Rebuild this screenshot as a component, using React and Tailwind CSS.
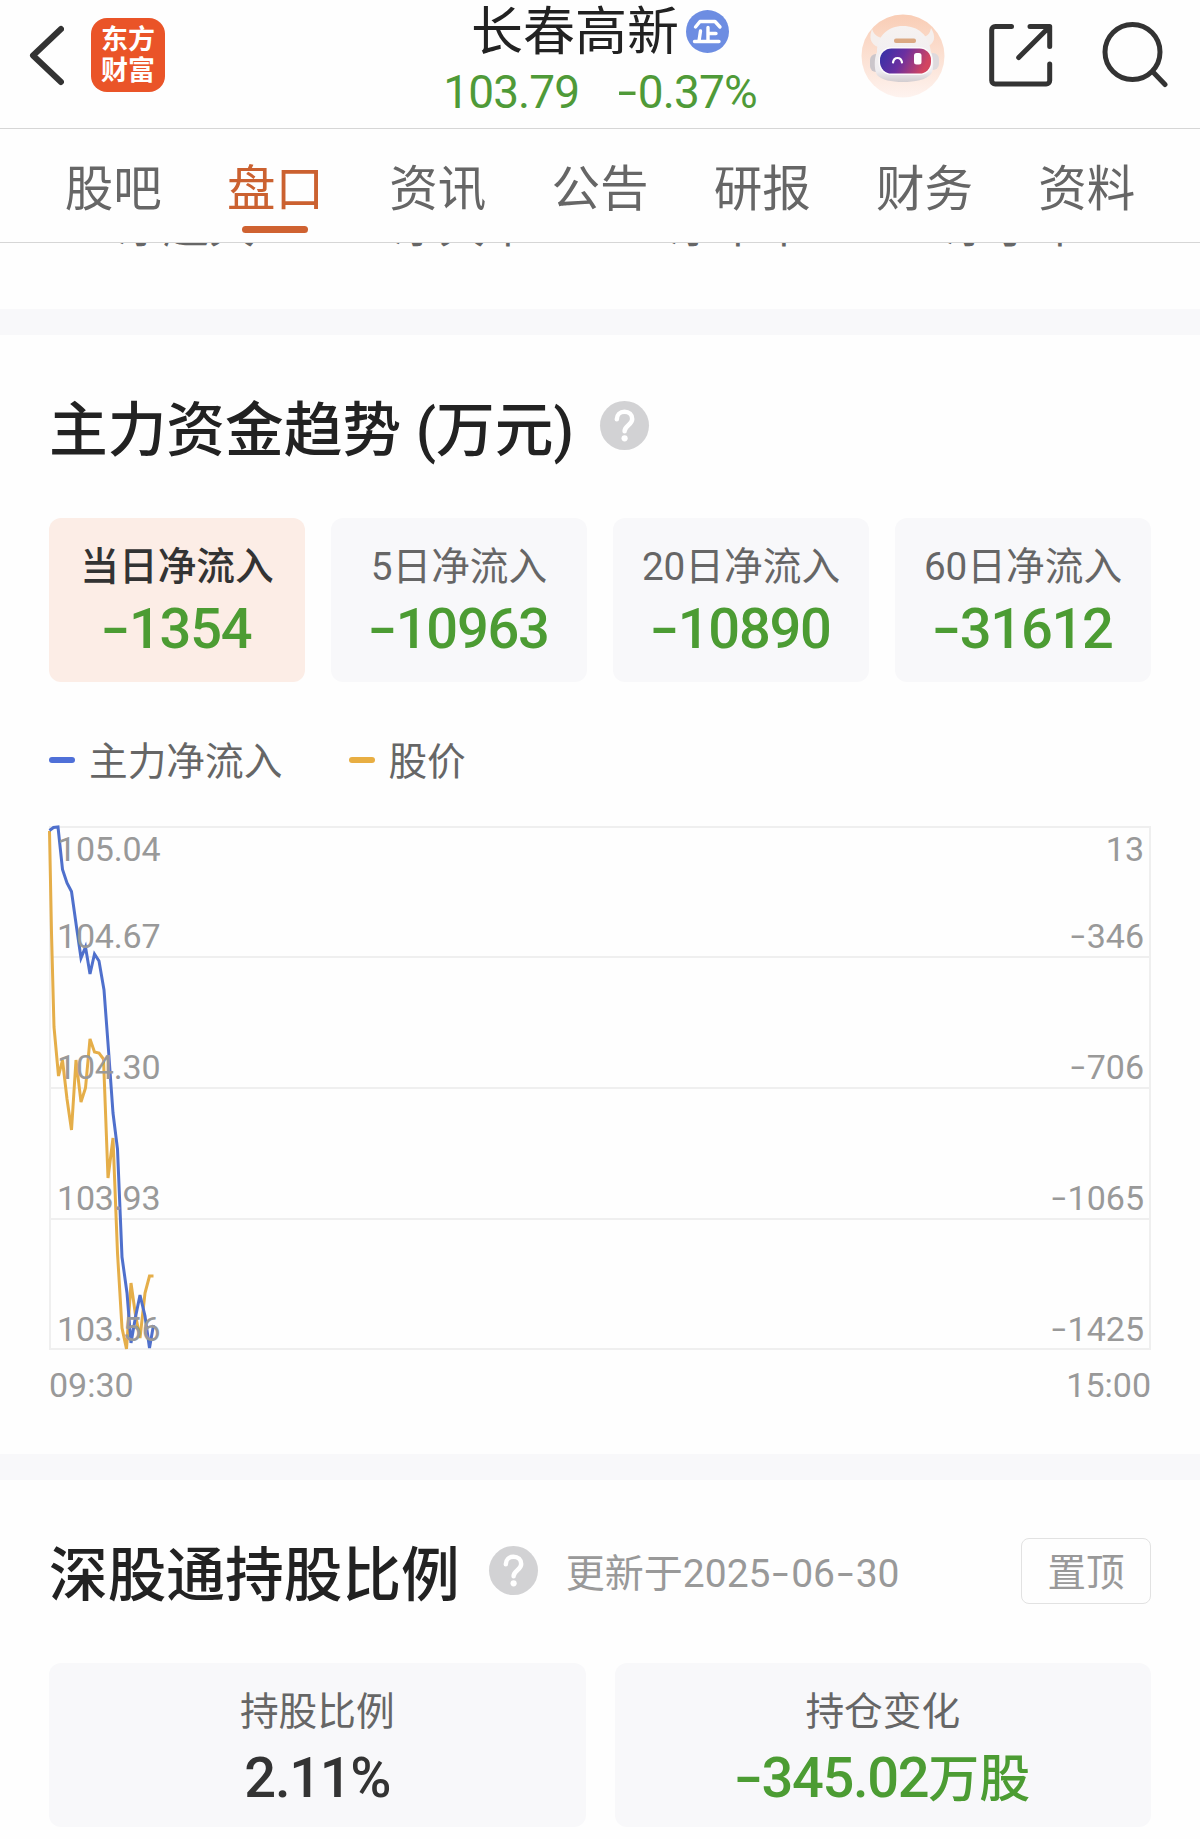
import React from "react";

const TABS = ["股吧", "盘口", "资讯", "公告", "研报", "财务", "资料"];
const ORDER_LABELS = ["净超大", "净大单", "净中单", "净小单"];

const PERIODS = [
  { label: "当日净流入", value: "-1354", active: true },
  { label: "5日净流入", value: "-10963" },
  { label: "20日净流入", value: "-10890" },
  { label: "60日净流入", value: "-31612" },
];

const ROWS = [
  { price: "105.04", flow: "13", top: "top-[3px]" },
  { price: "104.67", flow: "-346", top: "top-[90px]" },
  { price: "104.30", flow: "-706", top: "top-[221px]" },
  { price: "103.93", flow: "-1065", top: "top-[352px]" },
  { price: "103.56", flow: "-1425", top: "top-[483px]" },
];

// one point per minute, in chart pixels
const FLOW =
  "0.5,3.5 4.5,0.5 9,0 13.5,42.5 18,56 22.5,64.5 27.5,100 32,131 36.5,120 41,147 45.5,127 50,134 55,163 59.5,223 64,286 68.5,322 73,430 78,466 82,516 86.5,490 91,468 96,489 100.5,521 104.5,498";
const PRICE =
  "0.5,4 2.5,106 5,200 9.5,249 13.5,233 18,272 22.5,303 27,233 32,275 36.5,261 41,212 45.5,225 50,226 54.5,232 59,351 64,311 68.5,426 73,501 77.5,522 82,456 86.5,488 91,511 96,466 100.5,449 104.5,449";

// the hyphen is drawn wider than the font's own, as in DIN figures
function Num({ children, gap = "w-[0.47em]" }) {
  return children.split(/(-)/).map((part, i) =>
    part === "-" ? (
      <span key={i} className={`inline-block text-center tracking-normal ${gap}`}>
        <span className="inline-block scale-x-[1.5] -translate-y-[0.02em]">-</span>
      </span>
    ) : (
      part
    )
  );
}

function Help() {
  return (
    <span className="mb-[6px] grid h-[49px] w-[49px] shrink-0 place-items-center rounded-full bg-[#d2d2d4]">
      <svg viewBox="0 0 49 49" className="h-full w-full" fill="none" stroke="#fff" strokeWidth="4.500" strokeLinecap="round">
        <path d="M16.800 18.300c0-4.600 3.300-7.600 7.700-7.600s7.700 3 7.700 7.300c0 5.800-7.600 6.600-7.600 12.200" />
        <circle cx="24.600" cy="37.300" r="3.100" fill="#fff" stroke="none" />
      </svg>
    </span>
  );
}

function Robot() {
  return (
    <svg viewBox="0 0 84 84" className="h-[84px] w-[84px]">
      <defs>
        <linearGradient id="halo" x1="0" y1="0" x2="0" y2="1">
          <stop offset="0" stopColor="#f9cdb5" />
          <stop offset="1" stopColor="#fef3ef" />
        </linearGradient>
        <linearGradient id="shell" x1="0" y1="0" x2="0" y2="1">
          <stop offset="0" stopColor="#f6f2f1" />
          <stop offset="0.8" stopColor="#efedf0" />
          <stop offset="1" stopColor="#d3cdd0" />
        </linearGradient>
        <linearGradient id="visor" x1="0" y1="0" x2="1" y2="0.250">
          <stop offset="0" stopColor="#3232a8" />
          <stop offset="0.5" stopColor="#6b2fa0" />
          <stop offset="1" stopColor="#d24560" />
        </linearGradient>
      </defs>
      <circle cx="42" cy="42" r="41.500" fill="url(#halo)" />
      <path d="M11 15c-3 8-2 15 6 18l7-9c-7 0-11-3-13-9zM70 14c5 8 4 15-3 18l-7-9c6 0 9-3 10-9z" fill="#f5efed" />
      <rect x="9" y="40" width="12" height="18" rx="6" fill="#cbc6cb" />
      <rect x="66" y="39" width="12" height="17" rx="6" fill="#dedadd" />
      <path d="M16 38C16 22 27 12 42 12s26 9 28 26c3 6 3 18 0 22-5 6-16 8-28 8s-21-2-26-7c-3-5-3-17 0-23z" fill="url(#shell)" />
      <rect x="33" y="24.500" width="22" height="4.500" rx="2" fill="#dba983" />
      <rect x="17.500" y="33" width="54" height="28" rx="13" fill="#fcfafb" />
      <rect x="19" y="34.500" width="51" height="25" rx="11.500" fill="url(#visor)" />
      <path d="M32 48.500c1-6 8-6 9 0" fill="none" stroke="#fff" strokeWidth="2.200" strokeLinecap="round" />
      <rect x="53" y="39" width="7.500" height="11.500" rx="2.500" fill="#fff" />
    </svg>
  );
}

function Header() {
  return (
    <header className="grid h-[129px] grid-cols-[430px_340px_430px] border-b border-[#d6d6d6]">
      <div className="flex pl-[28px]">
        <svg viewBox="0 0 36 62" className="mt-[25px] h-[62px] w-9" fill="none" stroke="#333" strokeWidth="6" strokeLinecap="round" strokeLinejoin="round">
          <path d="M33 4 5 30.500 33 57" />
        </svg>
        <div className="mt-[18px] ml-[27px] flex h-[74px] w-[74px] flex-col items-center justify-center rounded-2xl bg-[#ea5428] pt-[2px] text-[27px] leading-[31px] font-bold text-white">
          <span>东方</span>
          <span>财富</span>
        </div>
      </div>

      <div className="flex flex-col items-center text-center">
        <div className="flex h-[63px] items-center gap-[7px]">
          <span className="pt-[3px] text-[52px] leading-[60px] text-[#222]">长春高新</span>
          <svg viewBox="0 0 43 43" className="h-[43px] w-[43px]">
            <circle cx="21.500" cy="21.500" r="21.500" fill="#6d8de2" />
            <path d="M9.500 17 14 11.500h15L34 17M22 17.500V31M14.500 21 13 31M22.500 23.500H30M8.500 31.500H33" fill="none" stroke="#fff" strokeWidth="3.400" strokeLinecap="round" strokeLinejoin="round" />
          </svg>
        </div>
        <div className="flex gap-[37px] text-[46px] leading-[58px] tracking-[-0.900px] text-[#4f9a38]">
          <span>103.79</span>
          <span><Num>-0.37%</Num></span>
        </div>
      </div>

      <div className="flex pl-[91px]">
        <div className="mt-[14px]"><Robot /></div>
        <svg viewBox="0 0 64 64" className="mt-6 ml-[44px] h-16 w-16" fill="none" stroke="#333" strokeWidth="5" strokeLinecap="round" strokeLinejoin="round">
          <path d="M22.500 2.500H6.200a3.500 3.500 0 0 0-3.500 3.500v50.500A3.500 3.500 0 0 0 6.200 60h51a3.500 3.500 0 0 0 3.500-3.500V40" />
          <path d="M41 2.500h19.700V22.500M60 3.200 29.700 33.500" />
        </svg>
        <svg viewBox="0 0 66 66" className="mt-[22px] ml-[49px] h-[66px] w-[66px]" fill="none" stroke="#333" strokeWidth="5" strokeLinecap="round">
          <circle cx="30.500" cy="30" r="27.500" />
          <path d="m51 50 12 12.500" />
        </svg>
      </div>
    </header>
  );
}

function Tabs() {
  return (
    <nav className="grid h-[114px] grid-cols-7 border-b border-[#d6d6d6] px-8">
      {TABS.map((t) => {
        const active = t === "盘口";
        return (
          <div key={t} className={`flex flex-col items-center text-[48.500px] ${active ? "text-[#cb6130]" : "text-[#666]"}`}>
            <span className="mt-[25px] leading-[72px]">{t}</span>
            {active && <span className="h-[7px] w-[66px] rounded-full bg-[#cf6231]" />}
          </div>
        );
      })}
    </nav>
  );
}

function Card({ label, value, unit, active, tone = "text-[#4c9c33]", valueTop = "mt-[3px]" }) {
  return (
    <div className={`flex h-[164px] flex-1 flex-col items-center rounded-xl ${active ? "bg-[#fcede6]" : "bg-[#f8f8fa]"}`}>
      <span className={`mt-[24px] text-[38.700px] leading-[50px] ${active ? "font-medium text-[#333]" : "text-[#666]"}`}>{label}</span>
      <span className={`text-[56px] leading-[68px] font-medium tracking-[-1.300px] ${valueTop} ${tone}`}>
        <Num>{value}</Num>
        {unit && <span className="text-[51px] tracking-normal">{unit}</span>}
      </span>
    </div>
  );
}

function Chart() {
  return (
    <div className="mt-[41px]">
      <div className="relative h-[524px] text-[34px] leading-[40px] text-[#999]">
        <svg viewBox="0 0 1102 524" className="absolute inset-0 h-full w-full overflow-visible" fill="none">
          <path d="M0 1H1102M0 131H1102M0 262H1102M0 393H1102M0 523H1102M1 0V524M1101 0V524" stroke="#efefef" strokeWidth="2" />
          <g strokeWidth="3" transform="translate(0 1)">
            <polyline points={PRICE} stroke="#e5ae49" />
            <polyline points={FLOW} stroke="#4f70cc" />
          </g>
        </svg>
        {ROWS.map((r) => (
          <div key={r.price} className={`absolute inset-x-0 flex justify-between pr-[7px] pl-2 ${r.top}`}>
            <span className="tracking-[-0.200px]">{r.price}</span>
            <span><Num gap="w-[0.5em]">{r.flow}</Num></span>
          </div>
        ))}
      </div>
      <div className="mt-[15px] flex justify-between text-[34px] leading-[40px] text-[#999]">
        <span>09:30</span>
        <span>15:00</span>
      </div>
    </div>
  );
}

export default function App() {
  return (
    <div className="h-[1839px] w-[1200px] overflow-hidden bg-[#fefefe] font-[Roboto,'Noto_Sans_CJK_SC',sans-serif]">
      <Header />
      <Tabs />

      {/* tail of the scrolled-off block */}
      <div className="h-[66px] overflow-hidden">
        <div className="-mt-[47px] grid grid-cols-4 px-12 text-center text-[46px] leading-[60px] text-[#666]">
          {ORDER_LABELS.map((l) => <span key={l}>{l}</span>)}
        </div>
      </div>
      <div className="h-[26px] bg-[#f8f8fa]" />

      <section className="h-[1119px] px-[49px] pt-[54px]">
        <div className="flex h-[78px] items-center gap-[26px]">
          <h2 className="pt-[6px] text-[58.700px] leading-[72px] font-medium text-[#222]">主力资金趋势 (万元)</h2>
          <Help />
        </div>
        <div className="mt-[51px] flex gap-[26px]">
          {PERIODS.map((p) => <Card key={p.label} {...p} />)}
        </div>
        <div className="mt-[53px] flex h-[50px] items-center text-[38.700px] text-[#666]">
          <span className="h-[6px] w-[26px] rounded-full bg-[#4f70d8]" />
          <span className="ml-[14px] pt-1 leading-[50px]">主力净流入</span>
          <span className="ml-[67px] h-[6px] w-[26px] rounded-full bg-[#e8ae42]" />
          <span className="ml-[13px] pt-1 leading-[50px]">股价</span>
        </div>
        <Chart />
      </section>
      <div className="h-[26px] bg-[#f8f8fa]" />

      <section className="px-[49px] pt-[54px]">
        <div className="flex h-[78px] items-center">
          <h2 className="pt-[6px] text-[58.700px] leading-[72px] font-medium text-[#222]">深股通持股比例</h2>
          <span className="ml-[29px]"><Help /></span>
          <span className="ml-[28px] pt-px text-[39px] leading-[50px] text-[#999]">更新于<Num gap="w-[0.53em]">2025-06-30</Num></span>
          <button className="mb-1 ml-auto h-[66px] w-[130px] rounded-lg border border-[#e2e2e2] pt-[3px] text-[38.500px] leading-[61px] text-[#999]">置顶</button>
        </div>
        <div className="mt-[51px] flex gap-[29px]">
          <Card label="持股比例" value="2.11%" tone="text-[#333]" valueTop="mt-[7px]" />
          <Card label="持仓变化" value="-345.02" unit="万股" valueTop="mt-[7px]" />
        </div>
      </section>
    </div>
  );
}
